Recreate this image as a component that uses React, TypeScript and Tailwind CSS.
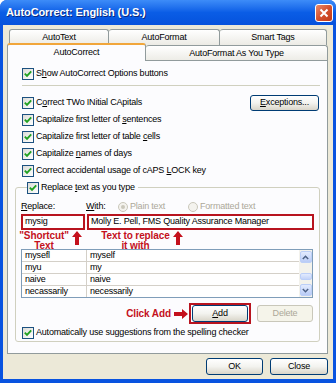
import type { ReactNode } from 'react'

function Check() {
  return (
    <span className="w-[12px] h-[12px] shrink-0 border border-[#1c5180] bg-gradient-to-br from-[#dcdcd7] to-white flex items-center justify-center">
      <svg width="8" height="8" viewBox="0 0 8 8">
        <path d="M0.8 3.6 L3 5.8 L7.2 1.4" stroke="#21a121" strokeWidth="1.9" fill="none" />
      </svg>
    </span>
  )
}

function CheckRow({ children, className = '' }: { children: ReactNode; className?: string }) {
  return (
    <div className={`h-[17px] flex items-center gap-[2px] ${className}`}>
      <Check />
      <span>{children}</span>
    </div>
  )
}

function Btn({ children, className = '', disabled = false }: { children: ReactNode; className?: string; disabled?: boolean }) {
  return (
    <div
      className={`flex items-center justify-center rounded-[3px] border ${
        disabled
          ? 'border-[#c9c7ba] bg-[#f5f4ea] text-[#aca899]'
          : 'border-[#003c74] bg-gradient-to-b from-white via-[#f3f3ef] to-[#d9d5c9] text-black'
      } ${className}`}
    >
      {children}
    </div>
  )
}

function Radio({ dot }: { dot?: boolean }) {
  return (
    <span className="w-[10px] h-[10px] rounded-full border border-[#cac8bb] bg-[#f4f3ee] flex items-center justify-center shrink-0">
      {dot && <span className="w-[4px] h-[4px] rounded-full bg-[#cac8bb]" />}
    </span>
  )
}

function UpArrow() {
  return (
    <svg width="10" height="14" viewBox="0 0 10 14" className="shrink-0">
      <polygon points="5,0 10,6 7,6 7,14 3,14 3,6 0,6" fill="#c4101c" />
    </svg>
  )
}

function Chevron({ up }: { up?: boolean }) {
  return (
    <svg width="7" height="5" viewBox="0 0 7 5">
      <path d={up ? 'M0.8 4 L3.5 1.3 L6.2 4' : 'M0.8 1 L3.5 3.7 L6.2 1'} stroke="#4d6185" strokeWidth="1.5" fill="none" />
    </svg>
  )
}

const rows = [
  ['mysefl', 'myself'],
  ['myu', 'my'],
  ['naive', 'naive'],
  ['necassarily', 'necessarily'],
]

export default function App() {
  return (
    <div className="w-[336px] h-[383px] bg-white">
      <div className="w-[336px] h-[383px] bg-[#0853e0] rounded-t-[7px] overflow-hidden flex flex-col font-['Liberation_Sans',Arial,sans-serif] text-[9px] tracking-[-0.2px] text-black">
        {/* title bar */}
        <div className="h-[25px] shrink-0 flex items-center justify-between bg-gradient-to-b from-[#3d8cf8] via-[#0a5de6] to-[#0652dc]">
          <span className="pl-[6px] text-white font-bold text-[11px] tracking-[-0.1px] [text-shadow:1px_1px_0_#0a2a80]">
            AutoCorrect: English (U.S.)
          </span>
          <div className="mr-[3px] w-[18px] h-[18px] rounded-[3px] border border-white bg-gradient-to-br from-[#e8896a] via-[#d4502d] to-[#c13a16] flex items-center justify-center">
            <svg width="10" height="10" viewBox="0 0 10 10">
              <path d="M1.5 1.5 L8.5 8.5 M8.5 1.5 L1.5 8.5" stroke="white" strokeWidth="2" />
            </svg>
          </div>
        </div>

        {/* body */}
        <div className="flex-1 mx-[3px] mb-[4px] bg-[#ece9d8] flex flex-col pt-[4px]">
          {/* back tab row */}
          <div className="flex h-[16px] ml-[6px]">
            <div className="w-[100px] border border-b-0 border-[#919b9c] rounded-t-[3px] bg-gradient-to-b from-white to-[#ecebe5] flex items-center justify-center">AutoText</div>
            <div className="w-[111px] border border-b-0 border-l-0 border-[#919b9c] rounded-t-[3px] bg-gradient-to-b from-white to-[#ecebe5] flex items-center justify-center">AutoFormat</div>
            <div className="w-[107px] border border-b-0 border-l-0 border-[#919b9c] rounded-t-[3px] bg-gradient-to-b from-white to-[#ecebe5] flex items-center justify-center">Smart Tags</div>
          </div>
          {/* front tab row */}
          <div className="flex -mt-[2px] ml-[4px] mr-[5px] items-start">
            <div className="relative z-10 w-[139px] h-[18px] border border-b-0 border-[#919b9c] border-t-[2px] border-t-[#f1a63b] rounded-t-[3px] bg-[#fcfcfe] flex items-center justify-center">
              AutoCorrect
            </div>
            <div className="flex-1 mt-[2px] h-[16px] border border-b-0 border-l-0 border-[#919b9c] rounded-t-[3px] bg-gradient-to-b from-white to-[#ecebe5] flex items-center justify-center">
              AutoFormat As You Type
            </div>
          </div>

          {/* panel */}
          <div className="-mt-[1px] ml-[4px] mr-[5px] border border-[#919b9c] bg-[#fcfcfe] pt-[4px] pb-[11px]">
            <CheckRow className="ml-[14px]">
              S<span className="underline">h</span>ow AutoCorrect Options buttons
            </CheckRow>
            <div className="mt-[3px] ml-[14px] mr-[7px] h-px bg-[#d0d0bf]" />
            <div className="mt-[8px] ml-[14px] mr-[8px] flex items-center justify-between">
              <CheckRow>
                C<span className="underline">o</span>rrect TWo INitial CApitals
              </CheckRow>
              <Btn className="w-[69px] h-[16px]">
                <span className="underline">E</span>xceptions...
              </Btn>
            </div>
            <CheckRow className="ml-[14px]">
              Capitalize first letter of <span className="underline">s</span>entences
            </CheckRow>
            <CheckRow className="ml-[14px]">
              Capitalize first letter of table <span className="underline">c</span>ells
            </CheckRow>
            <CheckRow className="ml-[14px]">
              Capitalize <span className="underline">n</span>ames of days
            </CheckRow>
            <CheckRow className="ml-[14px]">
              Correct accidental usage of cAPS <span className="underline">L</span>OCK key
            </CheckRow>

            <fieldset className="mx-[7px] border border-[#d0d0bf] rounded-[3px] pl-[5px]">
              <legend className="ml-[6px] pr-[3px]">
                <CheckRow>
                  Replace <span className="underline">t</span>ext as you type
                </CheckRow>
              </legend>

              <div className="mt-[5px] h-[12px] flex items-center">
                <span className="w-[65px]">
                  <span className="underline">R</span>eplace:
                </span>
                <span className="w-[32px]">
                  <span className="underline">W</span>ith:
                </span>
                <span className="w-[70px] flex items-center gap-[2px] text-[#aca899]">
                  <Radio dot />
                  Plain text
                </span>
                <span className="flex items-center gap-[2px] text-[#aca899]">
                  <Radio />
                  Formatted text
                </span>
              </div>

              <div className="mt-[1px] h-[16px] flex gap-[2px]">
                <div className="w-[64px] border-2 border-[#b8141f] bg-white flex items-center pl-[2px]">mysig</div>
                <div className="w-[227px] border-2 border-[#b8141f] bg-white flex items-center pl-[2px]">
                  Molly E. Pell, FMS Quality Assurance Manager
                </div>
              </div>

              <div className="h-[19px] flex items-start pt-[1px] text-[#c4101c] font-bold text-[10px] leading-[10px] tracking-[-0.1px]">
                <div className="-ml-[5px] w-[56px] text-center">
                  "Shortcut"
                  <br />
                  Text
                </div>
                <UpArrow />
                <div className="ml-[16px] w-[75px] text-center">
                  Text to replace
                  <br />
                  it with
                </div>
                <UpArrow />
              </div>

              <div className="w-[292px] h-[49px] border border-[#7f9db9] bg-white flex">
                <div className="flex-1 flex flex-col">
                  {rows.map(([a, b], i) => (
                    <div key={a} className={`flex ${i < 3 ? 'h-[12px] border-b border-[#d4d0c8]' : 'h-[11px]'}`}>
                      <div className="w-[65px] border-r border-[#d4d0c8] pl-[3px] flex items-center">{a}</div>
                      <div className="flex-1 pl-[3px] flex items-center">{b}</div>
                    </div>
                  ))}
                </div>
                <div className="w-[13px] bg-[#f3f2ec] flex flex-col items-center py-[1px]">
                  <div className="w-[12px] h-[12px] rounded-[2px] border border-[#bccff8] bg-gradient-to-b from-[#e3ebfe] to-[#b9cbf6] flex items-center justify-center">
                    <Chevron up />
                  </div>
                  <div className="flex-1 flex items-end pb-[4px]">
                    <div className="w-[12px] h-[7px] rounded-[2px] border border-[#bccff8] bg-gradient-to-b from-[#e3ebfe] to-[#c3d3f8]" />
                  </div>
                  <div className="w-[12px] h-[12px] rounded-[2px] border border-[#bccff8] bg-gradient-to-b from-[#e3ebfe] to-[#b9cbf6] flex items-center justify-center">
                    <Chevron />
                  </div>
                </div>
              </div>

              <div className="mt-[5px] w-[292px] h-[21px] flex items-center justify-end">
                <span className="text-[#c4101c] font-bold text-[10px] tracking-[-0.1px]">Click Add</span>
                <svg width="14" height="10" viewBox="0 0 14 10" className="ml-[3px] shrink-0">
                  <polygon points="0,3 8,3 8,0 14,5 8,10 8,7 0,7" fill="#c4101c" />
                </svg>
                <div className="ml-[1px] h-[21px] border-2 border-[#b8141f] px-[1px] flex items-center">
                  <Btn className="w-[56px] h-[17px]">
                    <span className="underline">A</span>dd
                  </Btn>
                </div>
                <Btn disabled className="ml-[6px] w-[56px] h-[17px]">
                  Delete
                </Btn>
              </div>

              <CheckRow className="ml-[1px] h-[16px]">Automatically use suggestions from the spelling checker</CheckRow>
            </fieldset>
          </div>

          {/* bottom buttons */}
          <div className="mt-[4px] mr-[5px] flex justify-end gap-[7px]">
            <Btn className="w-[57px] h-[17px]">OK</Btn>
            <Btn className="w-[58px] h-[17px]">Close</Btn>
          </div>
        </div>
      </div>
    </div>
  )
}
